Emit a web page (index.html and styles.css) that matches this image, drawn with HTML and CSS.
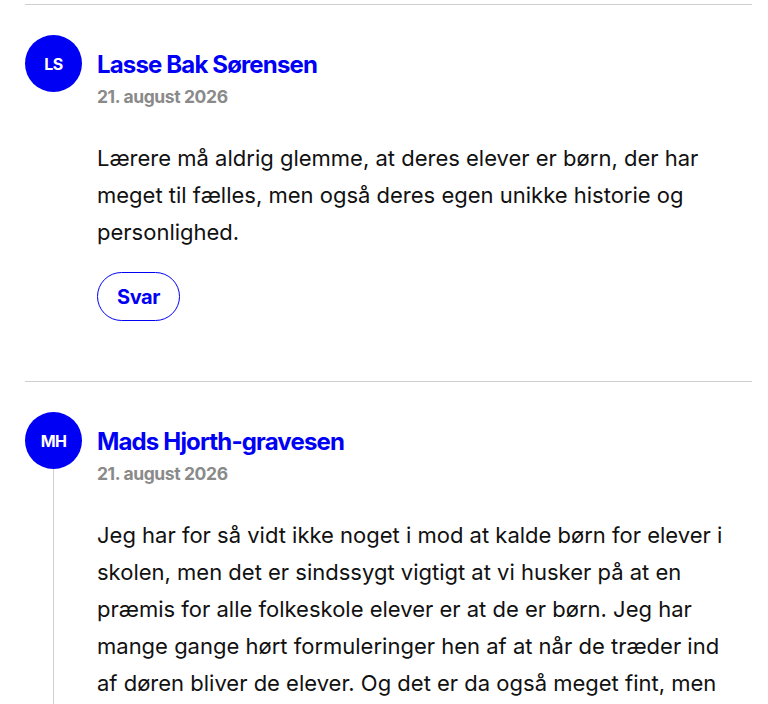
FILE: index.html
```html
<!DOCTYPE html>
<html lang="da">
<head>
    <meta charset="UTF-8">
    <meta name="viewport" content="width=device-width, initial-scale=1.0">
    <title>Kommentarer</title>
    <link rel="stylesheet" href="styles.css">
</head>
<body>
    <div class="comments">
        <div class="comment">
            <div class="avatar-col">
                <div class="avatar">LS</div>
            </div>
            <div class="comment-body">
                <a class="author" href="#">Lasse Bak Sørensen</a>
                <div class="date">21. august 2026</div>
                <p class="text">Lærere må aldrig glemme, at deres elever er børn, der har meget til fælles, men også deres egen unikke historie og personlighed.</p>
                <button class="reply">Svar</button>
            </div>
        </div>

        <div class="comment has-replies">
            <div class="avatar-col">
                <div class="avatar">MH</div>
                <div class="thread-line"></div>
            </div>
            <div class="comment-body">
                <a class="author" href="#">Mads Hjorth-gravesen</a>
                <div class="date">21. august 2026</div>
                <p class="text">Jeg har for så vidt ikke noget i mod at kalde børn for elever i skolen, men det er sindssygt vigtigt at vi husker på at en præmis for alle folkeskole elever er at de er børn. Jeg har mange gange hørt formuleringer hen af at når de træder ind af døren bliver de elever. Og det er da også meget fint, men det må aldrig blive en undskyldning for at glemme barnet.</p>
                <button class="reply">Svar</button>
            </div>
        </div>
    </div>
</body>
</html>
```

FILE: styles.css
```css
body {
    margin: 0;
    background: #fff;
    font-family: Inter, "Noto Sans", sans-serif;
    color: #111;
    overflow: hidden;
}

.comments {
    padding: 4px 16px 0 25px;
}

.comment {
    display: flex;
    gap: 15px;
    border-top: 1px solid #cfcfcf;
    padding: 30px 0 60px;
}

.avatar-col {
    display: flex;
    flex-direction: column;
    align-items: center;
    width: 57px;
    flex-shrink: 0;
}

.avatar {
    width: 57px;
    height: 57px;
    border-radius: 50%;
    background: #0000f5;
    color: #fff;
    font-weight: 700;
    font-size: 16px;
    letter-spacing: -0.6px;
    display: flex;
    align-items: center;
    justify-content: center;
}

.thread-line {
    flex: 1;
    width: 1px;
    background: #cfcfcf;
}

.comment-body {
    flex: 1;
    padding-top: 15px;
}

.author {
    display: block;
    color: #0000f5;
    font-size: 24px;
    font-weight: 700;
    letter-spacing: -0.85px;
    text-decoration: none;
    line-height: 30px;
}

.date {
    color: #8a8a8a;
    font-size: 17.5px;
    font-weight: 700;
    letter-spacing: -0.4px;
    margin-top: 6px;
}

.text {
    max-width: 632px;
    font-size: 22px;
    line-height: 37px;
    margin: 33px 0 21px;
}

.reply {
    font-family: inherit;
    background: #fff;
    color: #0000f5;
    border: 1px solid #0000f5;
    border-radius: 25px;
    font-size: 20px;
    font-weight: 700;
    letter-spacing: -0.4px;
    width: 83px;
    height: 49px;
    padding: 0;
    cursor: pointer;
}
```
